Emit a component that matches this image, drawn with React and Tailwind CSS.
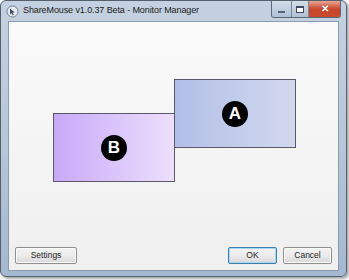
import React from 'react';

const Monitor = ({ label, className }) => (
  <div
    className={`absolute w-[122px] h-[69px] border border-[#5a5a66] flex items-center justify-center ${className}`}
  >
    <div className="w-[26px] h-[26px] rounded-full bg-black flex items-center justify-center text-white font-bold text-[17px] leading-none font-['Liberation_Sans',sans-serif]">
      {label}
    </div>
  </div>
);

const WinButton = ({ children, focused }) => (
  <button
    className={`h-[17px] rounded-[2px] border text-[8.5px] text-[#1e1e1e] font-['Liberation_Sans',sans-serif] bg-gradient-to-b from-[#f3f3f3] via-[#ebebeb] to-[#d8d8d8] ${
      focused ? 'border-[#3c7fb1] shadow-[inset_0_0_0_1px_#a6d8f4]' : 'border-[#8e8f8f] shadow-[inset_0_0_0_1px_#fbfbfb]'
    }`}
  >
    {children}
  </button>
);

export default function App() {
  return (
    <div className="w-[349px] h-[280px] bg-white">
      <div className="relative w-[347px] h-[277px] rounded-[6px] border border-[#55606e] bg-gradient-to-b from-[#c4d1e0] via-[#b8c7d8] to-[#a4b8d0] shadow-[2px_2px_3px_rgba(0,0,0,0.35)] flex flex-col">
        {/* title bar */}
        <div className="h-[20px] flex items-center pl-[5px] gap-[4px]">
          <svg width="13" height="13" viewBox="0 0 13 13">
            <circle cx="6.5" cy="6.5" r="5.5" fill="#e6ebf2" stroke="#6d7c8e" strokeWidth="1" />
            <path d="M4 3.5 L4 9.5 L5.6 8 L6.8 10.5 L7.8 10 L6.7 7.6 L8.8 7.6 Z" fill="#3b4a5c" />
          </svg>
          <span className="text-[9px] text-[#1b1b1b] font-['Liberation_Sans',sans-serif] tracking-[-0.1px]">
            ShareMouse v1.0.37 Beta - Monitor Manager
          </span>
        </div>

        {/* caption buttons */}
        <div className="absolute top-[0px] right-[5px] flex h-[17px] rounded-b-[3px] border border-t-0 border-[#5a6878] overflow-hidden">
          <div className="w-[20px] bg-gradient-to-b from-[#d3dde9] to-[#b0c0d3] border-r border-[#7a8898] flex items-center justify-center">
            <div className="w-[7px] h-[2px] bg-white border border-[#56657a] mt-[5px]" />
          </div>
          <div className="w-[17px] bg-gradient-to-b from-[#d3dde9] to-[#b0c0d3] border-r border-[#7a8898] flex items-center justify-center">
            <div className="w-[8px] h-[7px] border-[1.5px] border-[#3c4a5c] border-t-[2.5px] bg-white" />
          </div>
          <div className="w-[31px] bg-gradient-to-b from-[#e8a493] via-[#c9462c] to-[#c74a2e] flex items-center justify-center">
            <span className="text-white font-bold text-[10px] leading-none font-['Liberation_Sans',sans-serif] [text-shadow:0_0_1px_#6b1d0e]">
              ✕
            </span>
          </div>
        </div>

        {/* client area */}
        <div className="mx-[7px] h-[250px] border border-[#8a9bb0] bg-[#f0f0f0] flex flex-col">
          <div className="relative flex-1 bg-gradient-to-b from-[#fafafa] to-[#f0f0f0]">
            <Monitor label="A" className="left-[165px] top-[57px] bg-gradient-to-r from-[#b2bfe8] to-[#d2d9ee]" />
            <Monitor label="B" className="left-[44px] top-[91px] bg-gradient-to-r from-[#c8a9f8] to-[#eddffc]" />
          </div>
          <div className="flex items-center px-[6px] pb-[6px] pt-[2px]">
            <div className="w-[62px] flex">
              <WinButton>
                <span className="block w-[60px]">Settings</span>
              </WinButton>
            </div>
            <div className="flex-1" />
            <div className="flex gap-[6px]">
              <WinButton focused>
                <span className="block w-[47px]">OK</span>
              </WinButton>
              <WinButton>
                <span className="block w-[47px]">Cancel</span>
              </WinButton>
            </div>
          </div>
        </div>
      </div>
    </div>
  );
}
